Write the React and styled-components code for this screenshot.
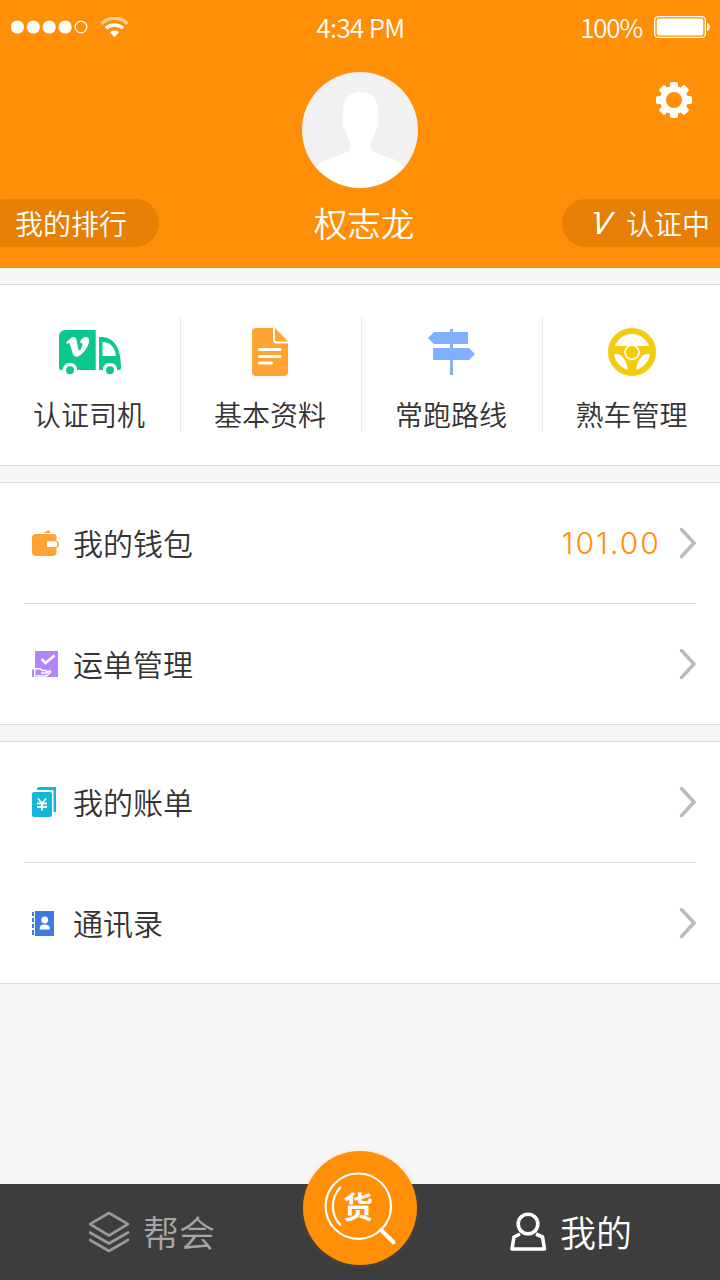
import React from "react";
import styled, { createGlobalStyle } from "styled-components";

const Global = createGlobalStyle`
  * { box-sizing: border-box; }
  body {
    margin: 0;
    background: #f7f7f7;
    font-family: "Noto Sans CJK SC", sans-serif;
    font-weight: 350;
    color: #333;
  }
  svg { display: block; flex: none; }
`;

const Screen = styled.div`
  width: 720px;
  height: 1280px;
  display: flex;
  flex-direction: column;
  overflow: hidden;
`;

const Header = styled.header`
  height: 268px;
  background: #ff8f06;
  color: #fff;
`;

const StatusBar = styled.div`
  height: 54px;
  padding: 0 10px 0 11px;
  display: grid;
  grid-template-columns: 1fr auto 1fr;
  align-items: center;
`;

const StatusGroup = styled.div`
  display: flex;
  align-items: center;
  justify-content: ${(p) => (p.$end ? "flex-end" : "flex-start")};
  gap: 12px;
`;

const StatusText = styled.span`
  font-size: 26px;
  line-height: 54px;
  letter-spacing: ${(p) => p.$spacing || "0"};
`;

const Profile = styled.div`
  display: grid;
  grid-template-columns: 1fr 116px 1fr;
  padding-top: 18px;
`;

const Settings = styled.div`
  grid-column: 3;
  justify-self: end;
  padding: 10px 28px 0 0;
`;

const Avatar = styled.div`
  grid-column: 2;
  width: 116px;
  height: 116px;
  border-radius: 50%;
  overflow: hidden;
  background: #f1f1f1;
`;

const Identity = styled.div`
  display: flex;
  justify-content: space-between;
  padding-top: 11px;
`;

const Pill = styled.div`
  width: ${(p) => p.$width};
  height: 48px;
  display: flex;
  align-items: center;
  gap: 10px;
  padding-left: ${(p) => p.$inset};
  background: #e67f04;
  border-radius: ${(p) => (p.$right ? "24px 0 0 24px" : "5px 24px 24px 5px / 2px 24px 24px 2px")};
  font-size: 28px;
  line-height: 48px;
  white-space: nowrap;
`;

const Name = styled.div`
  font-size: 33.6px;
  line-height: 47px;
  margin-left: 7px;
`;

const Panel = styled.section`
  margin-top: 16px;
  background: #fff;
  border-top: 1px solid #dcdcdc;
  border-bottom: 1px solid #dcdcdc;
`;

const Services = styled(Panel)`
  height: 182px;
  padding: 32px 0 33px;
  display: flex;
`;

const Service = styled.div`
  width: 181px;
  display: flex;
  flex-direction: column;
  align-items: center;
  padding: 11px 2px 0 0;
  border-right: 1px solid #ebebeb;
  font-size: 28px;
  line-height: 40px;
  &:last-child { flex: 1; padding-right: 0; border-right: 0; }
  svg { margin-bottom: 18px; }
`;

const Row = styled.div`
  height: 120px;
  padding: 0 24px 0 32px;
  display: flex;
  align-items: center;
`;

const Divider = styled.hr`
  height: 1px;
  margin: 0 24px;
  border: 0;
  background: #dcdcdc;
`;

const RowLabel = styled.span`
  flex: 1;
  padding: 0 0 2px 13px;
  font-size: 30px;
`;

const Amount = styled.span`
  margin-right: 18px;
  font-family: Inter, sans-serif;
  font-size: 30px;
  font-weight: 300;
  letter-spacing: 2.1px;
  color: #ff8f06;
`;

const TabBar = styled.nav`
  height: 96px;
  margin-top: auto;
  background: #3d3d3d;
  display: grid;
  grid-template-columns: 303px 114px 303px;
`;

const Tab = styled.div`
  display: flex;
  align-items: center;
  gap: 13px;
  padding-left: ${(p) => p.$inset};
  color: ${(p) => (p.$active ? "#fff" : "#a6a6a6")};
  font-size: 36px;
`;

const TabLabel = styled.span`
  padding-bottom: 2px;
`;

const SearchButton = styled.div`
  position: relative;
  width: 114px;
  height: 114px;
  margin-top: -33px;
  border-radius: 50%;
  background: #ff8f06;
  box-shadow: 0 0 6px rgba(255, 143, 6, 0.15);
`;

const SearchGlyph = styled.span`
  position: absolute;
  left: 40px;
  top: 34px;
  font-size: 30px;
  line-height: 40px;
  font-weight: 700;
  color: #fff;
`;

const SignalIcon = () => (
  <svg width="77" height="14" viewBox="0 0 77 14" fill="#fff">
    {[6.4, 22.3, 38.2, 54.1].map((x) => <circle key={x} cx={x} cy="7" r="6.6" />)}
    <circle cx="70" cy="7" r="5.8" fill="none" stroke="#fff" strokeWidth="1.3" />
  </svg>
);

const WifiIcon = () => (
  <svg width="29" height="21" viewBox="0 0 29 21" fill="none" stroke="#fff" strokeWidth="3.6">
    <path d="M1.5 6.7C8.5 -.5 20.5 -.5 27.5 6.7" opacity=".55" />
    <path d="M6 11.3C10.5 6.9 18.5 6.9 23 11.3" />
    <path d="M10 15.5C12.5 12.9 16.5 12.9 19 15.5L14.5 20Z" fill="#fff" stroke="none" />
  </svg>
);

const BatteryIcon = () => (
  <svg width="56" height="22" viewBox="0 0 56 22">
    <rect x=".7" y=".7" width="50.6" height="20.6" rx="3.5" fill="none" stroke="#fff" strokeWidth="1.3" />
    <rect x="2.7" y="2.6" width="46.6" height="16.8" rx="2" fill="#fff" />
    <path d="M53 7Q56 8 56 11Q56 14 53 15Z" fill="#fff" />
  </svg>
);

const GearIcon = () => (
  <svg width="36" height="36" viewBox="0 0 36 36" fill="#fff">
    {[0, 45, 90, 135, 180, 225, 270, 315].map((a) => (
      <rect key={a} x="14" y="0" width="8" height="9" rx="1.8" transform={`rotate(${a} 18 18)`} />
    ))}
    <circle cx="18" cy="18" r="11" fill="none" stroke="#fff" strokeWidth="6" />
  </svg>
);

const PersonArt = () => (
  <svg width="116" height="116" viewBox="0 0 116 116" fill="#fff">
    <path d="M58 20C48 20 41 27 41 37V44C39.5 46 40 57 43.5 58C44.5 63 46 67 48 69.5V78C42 82 34 85 27 86.5C21 88 17 91 14 95C24 108 40 116 58 116C76 116 92 108 102 95C97 89 92 87 86 85.5C80 83 74 81 69 78V69.5C71 67 73 62 73.5 58C77 57 77.5 46 76 44V37C76 27 69 20 58 20Z" />
  </svg>
);

const VIcon = () => (
  <svg width="23" height="24" viewBox="0 0 23 24" fill="#fff">
    <path d="M.8 1H6.5L7 18.8L18.9 1H22.3L7.2 23H4L3.6 2.8H.8Z" />
  </svg>
);

const TruckIcon = () => (
  <svg width="64" height="48" viewBox="57 328 64 48" fill="#0bc88f">
    <path d="M66 330H95.7V370H77.3A7.3 7.3 0 0 0 62.7 370H61Q59 370 59 368V337Q59 330 66 330Z" />
    <path fillRule="evenodd" d="M99 337C113 336 121 346 121 367V368Q121 370 119 370H117.3A7.3 7.3 0 0 0 102.7 370H99ZM102.5 342V356H116C115 347 110.5 342 102.5 342Z" />
    <circle cx="70" cy="370.3" r="4" />
    <circle cx="110" cy="370.3" r="4" />
    <path fill="#fff" d="M66 342.5L71 338C74 335.8 76 337.5 76.5 340L78.2 348.5C78.8 351 79.6 351 81 348.5C83 345 83.2 342 79.8 343C81 338.5 84 336.5 87 337.2C90 338 89.5 342.5 87.5 346.5C85 351 81 355.5 77.5 356.7C74.5 357.5 73 355 72.2 352L70 344.5C69.5 342.5 68.8 342.5 67.3 344Z" />
  </svg>
);

const DocumentIcon = () => (
  <svg width="36" height="48" viewBox="0 0 36 48">
    <path d="M4 0H21V12Q21 15.5 24.5 15.5H36V44Q36 48 32 48H4Q0 48 0 44V4Q0 0 4 0ZM23 0L36 13.5H25Q23 13.5 23 11.5Z" fill="#ffa333" />
    <path d="M7.5 21.5H28M7.5 28.5H28M7.5 35H19.5" stroke="#fff" strokeWidth="3" strokeLinecap="round" />
  </svg>
);

const SignpostIcon = () => (
  <svg width="47" height="48" viewBox="0 0 47 48" fill="#80b0ff">
    <path d="M22 1H25V4H40V16H25V20H41L47 26L41 32H25V47H22V32H5V20H22V16H6L0 10L6 4H22Z" />
  </svg>
);

const WheelIcon = () => (
  <svg width="48" height="48" viewBox="0 0 48 48">
    <circle cx="24" cy="24" r="21" fill="none" stroke="#f3cb0f" strokeWidth="6" />
    <path d="M5 18H43V26H40C34 26 29 32 28 43V44H20V43C19 32 14 26 8 26H5Z" fill="#f3cb0f" />
    <circle cx="24" cy="24.3" r="7" fill="#f3cb0f" stroke="#fff" strokeWidth="1.6" />
  </svg>
);

const WalletIcon = () => (
  <svg width="28" height="28" viewBox="0 0 28 28" fill="#ffa333">
    <path d="M11.5 4L16.5 1L18.5 4Z" />
    <path d="M4 5H21Q24.5 5 24.5 8.5V12H25.5Q27 13.5 27 15.2Q27 17 25.5 18.5H24.5V23Q24.5 27 20.5 27H4Q0 27 0 23V9Q0 5 4 5Z" />
    <path d="M15 12.2H24L25 13.2V17L24 18H15Z" fill="#fff" />
  </svg>
);

const WaybillIcon = () => (
  <svg width="28" height="28" viewBox="0 0 28 28">
    <path d="M3 1H26V27H3Z" fill="#b384fc" />
    <path d="M9.5 9L13.5 13L22.5 5.5" fill="none" stroke="#fff" strokeWidth="2.6" />
    <path d="M0 19.5H2V27H0Z" fill="#b384fc" />
    <path d="M2.8 19.5V27M3 18.8H8L10.5 20.5H13.5Q16 21 14 23H9M14.5 23.5L17.5 20.5L18.7 22L14.5 26H4" fill="none" stroke="#fff" strokeWidth="1.4" />
  </svg>
);

const BillIcon = () => (
  <svg width="28" height="30" viewBox="0 0 28 30">
    <path d="M5 2Q5 0 7 0H24V25H21.5V4Q21.5 3 20 3H5Z" fill="#14b7d5" />
    <rect y="5" width="20" height="25" rx="2" fill="#14b7d5" />
    <path d="M6 11.5L10 16.5L14 11.5M5 16.5H15M5 20H15M10 16V23.5" fill="none" stroke="#fff" strokeWidth="1.8" />
  </svg>
);

const ContactsIcon = () => (
  <svg width="28" height="26" viewBox="0 0 28 26" fill="#3d7be0">
    <path d="M3 1H22V26H3Z" />
    <path d="M0 2H2V6H0ZM0 8H2V12H0ZM0 14H2V18H0ZM0 20H2V25H0Z" />
    <circle cx="12.7" cy="10" r="3.4" fill="#fff" />
    <path d="M7.700 19.500V18Q7.700 14.500 12.700 14.500Q17.800 14.500 17.800 18V19.500Z" fill="#fff" />
  </svg>
);

const Chevron = () => (
  <svg width="17" height="32" viewBox="0 0 17 32" fill="none" stroke="#bbb" strokeWidth="3.5">
    <path d="M2.5 2.5L15 16L2.5 29.5" strokeLinecap="round" />
  </svg>
);

const LayersIcon = () => (
  <svg width="41" height="42" viewBox="0 0 41 42" fill="none" stroke="#999" strokeWidth="2.7" strokeLinejoin="round" strokeLinecap="round">
    <path d="M20 2L39 13.2L20 24.5L1 13.2Z" />
    <path d="M1 21.5L20 32.5L39 21.5M1 29L20 40L39 29" />
  </svg>
);

const UserIcon = () => (
  <svg width="37" height="40" viewBox="0 0 37 40" fill="none" stroke="#fff" strokeWidth="3.6" strokeLinejoin="round">
    <circle cx="18" cy="12" r="9.8" />
    <path d="M10 22L4 25L2 37H34.5L32.5 25L26 22" />
  </svg>
);

const MagnifierIcon = () => (
  <svg width="114" height="114" viewBox="0 0 114 114" fill="none" stroke="#fff" strokeWidth="2.2" strokeLinecap="round">
    <circle cx="55.3" cy="55.2" r="32.7" />
    <path d="M37.3 36.5A27.5 27.5 0 0 0 37.3 74" />
    <path d="M78 79L90.5 91.3" strokeWidth="4" />
  </svg>
);

const services = [
  ["认证司机", TruckIcon],
  ["基本资料", DocumentIcon],
  ["常跑路线", SignpostIcon],
  ["熟车管理", WheelIcon],
];

const MenuRow = ({ icon: Icon, label, amount }) => (
  <Row>
    <Icon />
    <RowLabel>{label}</RowLabel>
    {amount && <Amount>{amount}</Amount>}
    <Chevron />
  </Row>
);

export default function App() {
  return (
    <>
      <Global />
      <Screen>
        <Header>
          <StatusBar>
            <StatusGroup><SignalIcon /><WifiIcon /></StatusGroup>
            <StatusText $spacing="-0.7px">4:34 PM</StatusText>
            <StatusGroup $end><StatusText $spacing="-1.2px">100%</StatusText><BatteryIcon /></StatusGroup>
          </StatusBar>
          <Profile>
            <Avatar><PersonArt /></Avatar>
            <Settings><GearIcon /></Settings>
          </Profile>
          <Identity>
            <Pill $width="159px" $inset="15px">我的排行</Pill>
            <Name>权志龙</Name>
            <Pill $right $width="158px" $inset="31px"><VIcon />认证中</Pill>
          </Identity>
        </Header>
        <Services>
          {services.map(([label, Icon]) => (
            <Service key={label}><Icon />{label}</Service>
          ))}
        </Services>
        <Panel>
          <MenuRow icon={WalletIcon} label="我的钱包" amount="101.00" />
          <Divider />
          <MenuRow icon={WaybillIcon} label="运单管理" />
        </Panel>
        <Panel>
          <MenuRow icon={BillIcon} label="我的账单" />
          <Divider />
          <MenuRow icon={ContactsIcon} label="通讯录" />
        </Panel>
        <TabBar>
          <Tab $inset="89px"><LayersIcon /><TabLabel>帮会</TabLabel></Tab>
          <SearchButton><MagnifierIcon /><SearchGlyph>货</SearchGlyph></SearchButton>
          <Tab $active $inset="93px"><UserIcon /><TabLabel>我的</TabLabel></Tab>
        </TabBar>
      </Screen>
    </>
  );
}
